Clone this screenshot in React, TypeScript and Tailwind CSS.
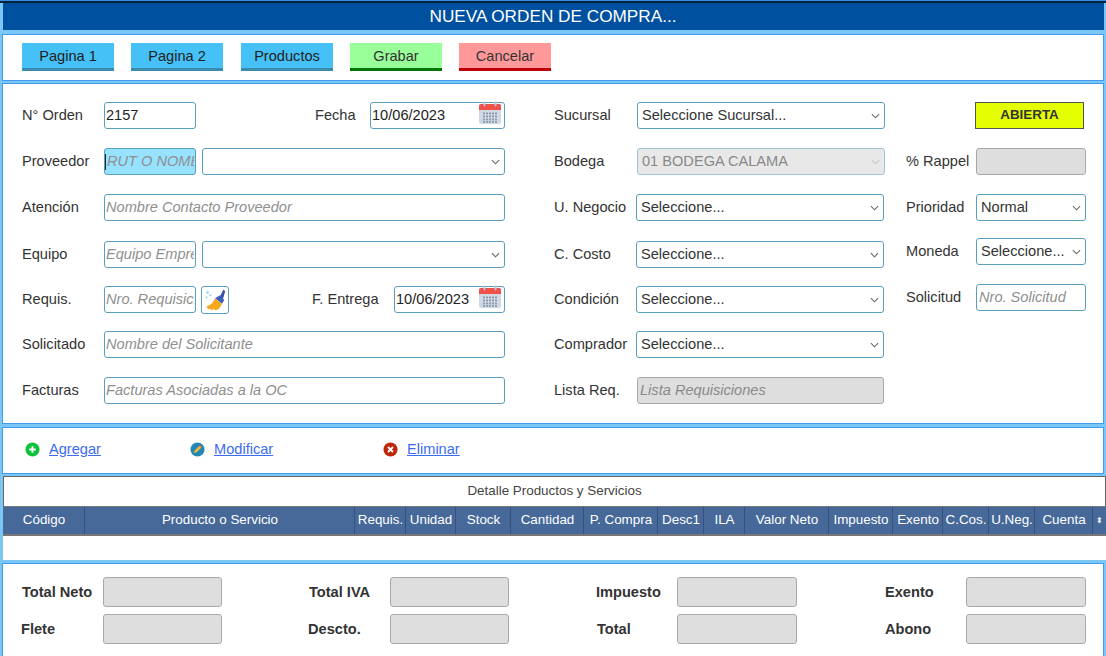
import React from "react";

const field = "h-[27px] border border-[#5a9fc0] rounded-[3px] text-[14.6px] text-[#222] outline-none px-[1px] pb-[1px] placeholder:italic placeholder:text-[#8f8f8f]";
const off = "h-[27px] border border-[#a8a8a8] rounded-[3px] bg-[#dedede]";
const label = "text-[14.6px] text-[#333] shrink-0";
const btn = "w-[92px] h-[28px] border-b-[3px] text-[14.6px] pt-[2px]";

function Chevron({ color = "#666" }: { color?: string }) {
  return (
    <svg viewBox="0 0 10 6" className="absolute right-[5px] top-[11px] w-[9px] h-[6px] pointer-events-none">
      <path d="M1 1l4 4 4-4" fill="none" stroke={color} strokeWidth="1.2" />
    </svg>
  );
}

function Select({ w, text = "" }: { w: string; text?: string }) {
  return (
    <div className={"relative shrink-0 " + w}>
      <select className="appearance-none w-full h-[27px] border border-[#5a9fc0] rounded-[3px] bg-white text-[14.6px] text-[#333] outline-none pl-[4px]">
        <option>{text}</option>
      </select>
      <Chevron />
    </div>
  );
}

function Calendar() {
  return (
    <svg viewBox="0 0 24 24" className="absolute right-[3px] top-[-1px] w-[24px] h-[24px]">
      <rect x="1" y="3" width="22" height="20" rx="2" fill="#cfd8e3" />
      <path d="M1 9V5a2 2 0 0 1 2-2h18a2 2 0 0 1 2 2v4z" fill="#f0504a" />
      <rect x="5.5" y="0.5" width="2" height="5" rx="1" fill="#b5c2cf" />
      <rect x="16.5" y="0.5" width="2" height="5" rx="1" fill="#b5c2cf" />
      {[5, 8, 11, 14, 17].map((x) =>
        [11.5, 14.5, 17.5, 20].map((y) => <rect key={x + "-" + y} x={x} y={y} width="2" height="1.8" fill="#8c9bab" />)
      )}
    </svg>
  );
}

function Brush() {
  return (
    <svg viewBox="0 0 28 28" className="w-[26px] h-[26px]">
      <circle cx="6" cy="6" r="1.4" fill="#8fd3f0" />
      <circle cx="9" cy="9" r="1.2" fill="#8fd3f0" />
      <circle cx="5" cy="11" r="1" fill="#8fd3f0" />
      <path d="M19 11 L23 3 L25 4.5 L22.5 13z" fill="#2f4fb0" />
      <path d="M14 12 L19.5 9 L24 14 L21.5 18z" fill="#3f5cc0" />
      <path d="M14 12.5 L21.5 18 C20 22 17 25 14.5 25 L12.5 23.5 L11 25 L8.5 23.5 L7 24 L4.5 21 C9 20 12 17 14 12.5z" fill="#f6a821" />
    </svg>
  );
}

function Plus() {
  return (
    <svg viewBox="0 0 16 16" className="w-[15px] h-[15px] shrink-0">
      <circle cx="8" cy="8" r="7.5" fill="#0fc13b" />
      <path d="M4.5 8h7M8 4.5v7" stroke="#fff" strokeWidth="2" />
    </svg>
  );
}
function Pencil() {
  return (
    <svg viewBox="0 0 16 16" className="w-[15px] h-[15px] shrink-0">
      <circle cx="8" cy="8" r="7.5" fill="#2187b5" />
      <path d="M4 12l1-3 5-5 2 2-5 5z" fill="#f3b63b" />
      <path d="M10 4l1-1 2 2-1 1z" fill="#e8604c" />
    </svg>
  );
}
function Cross() {
  return (
    <svg viewBox="0 0 16 16" className="w-[15px] h-[15px] shrink-0">
      <circle cx="8" cy="8" r="7.5" fill="#bf2507" />
      <path d="M5.3 5.3l5.4 5.4M10.7 5.3l-5.4 5.4" stroke="#fff" strokeWidth="2" />
    </svg>
  );
}

const columns: [string, string][] = [
  ["Código", "w-[82px]"],
  ["Producto o Servicio", "w-[270px]"],
  ["Requis.", "w-[51px]"],
  ["Unidad", "w-[50px]"],
  ["Stock", "w-[55px]"],
  ["Cantidad", "w-[73px]"],
  ["P. Compra", "w-[74px]"],
  ["Desc1", "w-[46px]"],
  ["ILA", "w-[41px]"],
  ["Valor Neto", "w-[84px]"],
  ["Impuesto", "w-[64px]"],
  ["Exento", "w-[50px]"],
  ["C.Cos.", "w-[46px]"],
  ["U.Neg.", "w-[46px]"],
  ["Cuenta", "w-[58px]"],
];

export default function App() {
  return (
    <div className="w-[1106px] h-[656px] overflow-hidden bg-[#7cc6f5] font-['Liberation_Sans',Arial,sans-serif]">
      <div className="h-[1px] bg-[#2f8fe8]" />
      <div className="h-[2px] bg-[#0b2238]" />
      <div className="h-[27px] ml-[3px] mr-[2px] bg-[#0050a0] flex items-center justify-center text-white text-[17.2px] pl-[1px] pr-[2px]">
        NUEVA ORDEN DE COMPRA...
      </div>

      <div className="mt-[4px] ml-[2px] mr-[2px] h-[47px] border border-[#3f9bf0] bg-white flex items-start pt-[8px] pl-[19px]">
        <button className={btn + " bg-[#45c1f7] border-[#3a8bad] text-[#222]"}>Pagina 1</button>
        <button className={btn + " ml-[17px] bg-[#45c1f7] border-[#3a8bad] text-[#222]"}>Pagina 2</button>
        <button className={btn + " ml-[18px] bg-[#45c1f7] border-[#3a8bad] text-[#222]"}>Productos</button>
        <button className={btn + " ml-[17px] bg-[#99ff99] border-[#007700] text-[#333]"}>Grabar</button>
        <button className={btn + " ml-[17px] bg-[#ff9999] border-[#bb0000] text-[#333]"}>Cancelar</button>
      </div>

      <div className="mt-[2px] ml-[2px] mr-[2px] h-[341px] border border-[#3f9bf0] bg-white flex pt-[18px] pl-[19px]">
        {/* left column */}
        <div className="w-[483px] shrink-0 flex flex-col">
          <div className="flex items-center h-[27px]">
            <span className={label + " w-[82px]"}>N° Orden</span>
            <input className={field + " w-[92px]"} defaultValue="2157" />
            <span className={label + " ml-[119px] w-[55px]"}>Fecha</span>
            <div className="relative">
              <input className={field + " w-[135px]"} defaultValue="10/06/2023" />
              <Calendar />
            </div>
          </div>
          <div className="flex items-center h-[27px] mt-[19px]">
            <span className={label + " w-[82px]"}>Proveedor</span>
            <div className="relative">
              <input className={field + " w-[92px] bg-[#97e2ff] !pl-[2px]"} placeholder="RUT O NOMBRE" />
              <span className="absolute left-[1px] top-[6px] w-[1px] h-[16px] bg-[#222]" />
            </div>
            <div className="ml-[6px]"><Select w="w-[303px]" /></div>
          </div>
          <div className="flex items-center h-[27px] mt-[19px]">
            <span className={label + " w-[82px]"}>Atención</span>
            <input className={field + " w-[401px]"} placeholder="Nombre Contacto Proveedor" />
          </div>
          <div className="flex items-center h-[27px] mt-[20px]">
            <span className={label + " w-[82px]"}>Equipo</span>
            <input className={field + " w-[92px]"} placeholder="Equipo Empresa" />
            <div className="ml-[6px]"><Select w="w-[303px]" /></div>
          </div>
          <div className="flex items-center h-[27px] mt-[18px]">
            <span className={label + " w-[82px]"}>Requis.</span>
            <input className={field + " w-[92px]"} placeholder="Nro. Requisición" />
            <button className="ml-[5px] w-[28px] h-[28px] border border-[#5a9fc0] rounded-[3px] flex items-center justify-center"><Brush /></button>
            <span className={label + " ml-[83px] w-[82px]"}>F. Entrega</span>
            <div className="relative">
              <input className={field + " w-[111px]"} defaultValue="10/06/2023" />
              <Calendar />
            </div>
          </div>
          <div className="flex items-center h-[27px] mt-[18px]">
            <span className={label + " w-[82px]"}>Solicitado</span>
            <input className={field + " w-[401px]"} placeholder="Nombre del Solicitante" />
          </div>
          <div className="flex items-center h-[27px] mt-[19px]">
            <span className={label + " w-[82px]"}>Facturas</span>
            <input className={field + " w-[401px]"} placeholder="Facturas Asociadas a la OC" />
          </div>
        </div>

        {/* middle column */}
        <div className="w-[352px] shrink-0 ml-[48px] flex flex-col">
          <div className="flex items-center h-[27px]">
            <span className={label + " w-[83px] pl-[1px]"}>Sucursal</span>
            <div className="ml-[1px]"><Select w="w-[248px]" text="Seleccione Sucursal..." /></div>
          </div>
          <div className="flex items-center h-[27px] mt-[19px]">
            <span className={label + " w-[83px] pl-[1px]"}>Bodega</span>
            <div className="relative w-[248px] shrink-0 ml-[1px]">
              <select disabled className="appearance-none w-full h-[27px] border border-[#9cc4d6] rounded-[3px] bg-[#e8e8e8] text-[14.6px] text-[#888] pl-[4px]"><option>01 BODEGA CALAMA</option></select>
              <Chevron color="#c4c4c4" />
            </div>
          </div>
          <div className="flex items-center h-[27px] mt-[19px]">
            <span className={label + " w-[83px] pl-[1px]"}>U. Negocio</span>
            <Select w="w-[248px]" text="Seleccione..." />
          </div>
          <div className="flex items-center h-[27px] mt-[20px]">
            <span className={label + " w-[83px] pl-[1px]"}>C. Costo</span>
            <Select w="w-[248px]" text="Seleccione..." />
          </div>
          <div className="flex items-center h-[27px] mt-[18px]">
            <span className={label + " w-[83px] pl-[1px]"}>Condición</span>
            <Select w="w-[248px]" text="Seleccione..." />
          </div>
          <div className="flex items-center h-[27px] mt-[18px]">
            <span className={label + " w-[83px] pl-[1px]"}>Comprador</span>
            <Select w="w-[248px]" text="Seleccione..." />
          </div>
          <div className="flex items-center h-[27px] mt-[19px]">
            <span className={label + " w-[84px] pl-[1px]"}>Lista Req.</span>
            <input disabled className={off + " w-[247px] text-[14.6px] px-[2px] pb-[1px] placeholder:italic placeholder:text-[#8a8a8a]"} placeholder="Lista Requisiciones" />
          </div>
        </div>

        {/* right column */}
        <div className="w-[180px] shrink-0 ml-[1px] flex flex-col">
          <div className="flex items-center h-[27px]">
            <div className="ml-[69px] w-[109px] h-[27px] bg-[#e3ff00] border border-[#555] flex items-center justify-center text-[13.4px] font-bold text-[#333]">ABIERTA</div>
          </div>
          <div className="flex items-center h-[27px] mt-[19px]">
            <span className={label + " w-[70px]"}>% Rappel</span>
            <input disabled className={off + " w-[110px]"} />
          </div>
          <div className="flex items-center h-[27px] mt-[19px]">
            <span className={label + " w-[70px]"}>Prioridad</span>
            <Select w="w-[110px]" text="Normal" />
          </div>
          <div className="flex items-center h-[27px] mt-[17px]">
            <span className={label + " w-[70px]"}>Moneda</span>
            <Select w="w-[110px]" text="Seleccione..." />
          </div>
          <div className="flex items-center h-[27px] mt-[19px]">
            <span className={label + " w-[70px]"}>Solicitud</span>
            <input className={field + " w-[110px] px-[2px]"} placeholder="Nro. Solicitud" />
          </div>
        </div>
      </div>

      <div className="mt-[3px] ml-[2px] mr-[2px] h-[47px] border border-[#3f9bf0] bg-white flex items-center pl-[22px] pb-[2px] text-[14.6px] text-[#3b6cf0]">
        <Plus />
        <a className="ml-[9px] underline w-[141px]">Agregar</a>
        <Pencil />
        <a className="ml-[9px] underline w-[169px]">Modificar</a>
        <Cross />
        <a className="ml-[9px] underline">Eliminar</a>
      </div>

      <div className="mt-[2px] ml-[3px] h-[84px] bg-white">
        <div className="h-[30px] border-t border-x border-[#666] flex items-center justify-center text-[13.4px] text-[#444]">Detalle Productos y Servicios</div>
        <div className="h-[30px] bg-[#46699a] border-y border-b-2 border-[#777] flex text-white text-[13.4px]">
          {columns.map(([name, w]) => (
            <div key={name} className={w + " shrink-0 border-r border-[#36527a] flex items-center justify-center pl-[1px] whitespace-nowrap"}>{name}</div>
          ))}
          <div className="flex-1 flex items-center justify-center text-[8px]">⬍</div>
        </div>
      </div>

      <div className="mt-[3px] ml-[2px] mr-[2px] h-[95px] border border-[#3f9bf0] bg-white pt-[13px] pl-[19px] text-[14.6px] font-bold text-[#333]">
        <div className="flex items-center h-[30px]">
          <span className="w-[81px] pt-[1px]">Total Neto</span>
          <input disabled className={off + " !h-[30px] w-[119px]"} />
          <span className="w-[81px] ml-[87px] pt-[1px]">Total IVA</span>
          <input disabled className={off + " !h-[30px] w-[119px]"} />
          <span className="w-[81px] ml-[87px] pt-[1px]">Impuesto</span>
          <input disabled className={off + " !h-[30px] w-[120px]"} />
          <span className="w-[81px] ml-[88px] pt-[1px]">Exento</span>
          <input disabled className={off + " !h-[30px] w-[120px]"} />
        </div>
        <div className="flex items-center h-[30px] mt-[7px]">
          <span className="w-[81px] ml-[-1px] pt-[1px]">Flete</span>
          <input disabled className={off + " !h-[30px] w-[119px] ml-[1px]"} />
          <span className="w-[82px] ml-[86px] pt-[1px]">Descto.</span>
          <input disabled className={off + " !h-[30px] w-[119px]"} />
          <span className="w-[80px] ml-[88px] pt-[1px]">Total</span>
          <input disabled className={off + " !h-[30px] w-[120px]"} />
          <span className="w-[81px] ml-[88px] pt-[1px]">Abono</span>
          <input disabled className={off + " !h-[30px] w-[120px]"} />
        </div>
      </div>
    </div>
  );
}
